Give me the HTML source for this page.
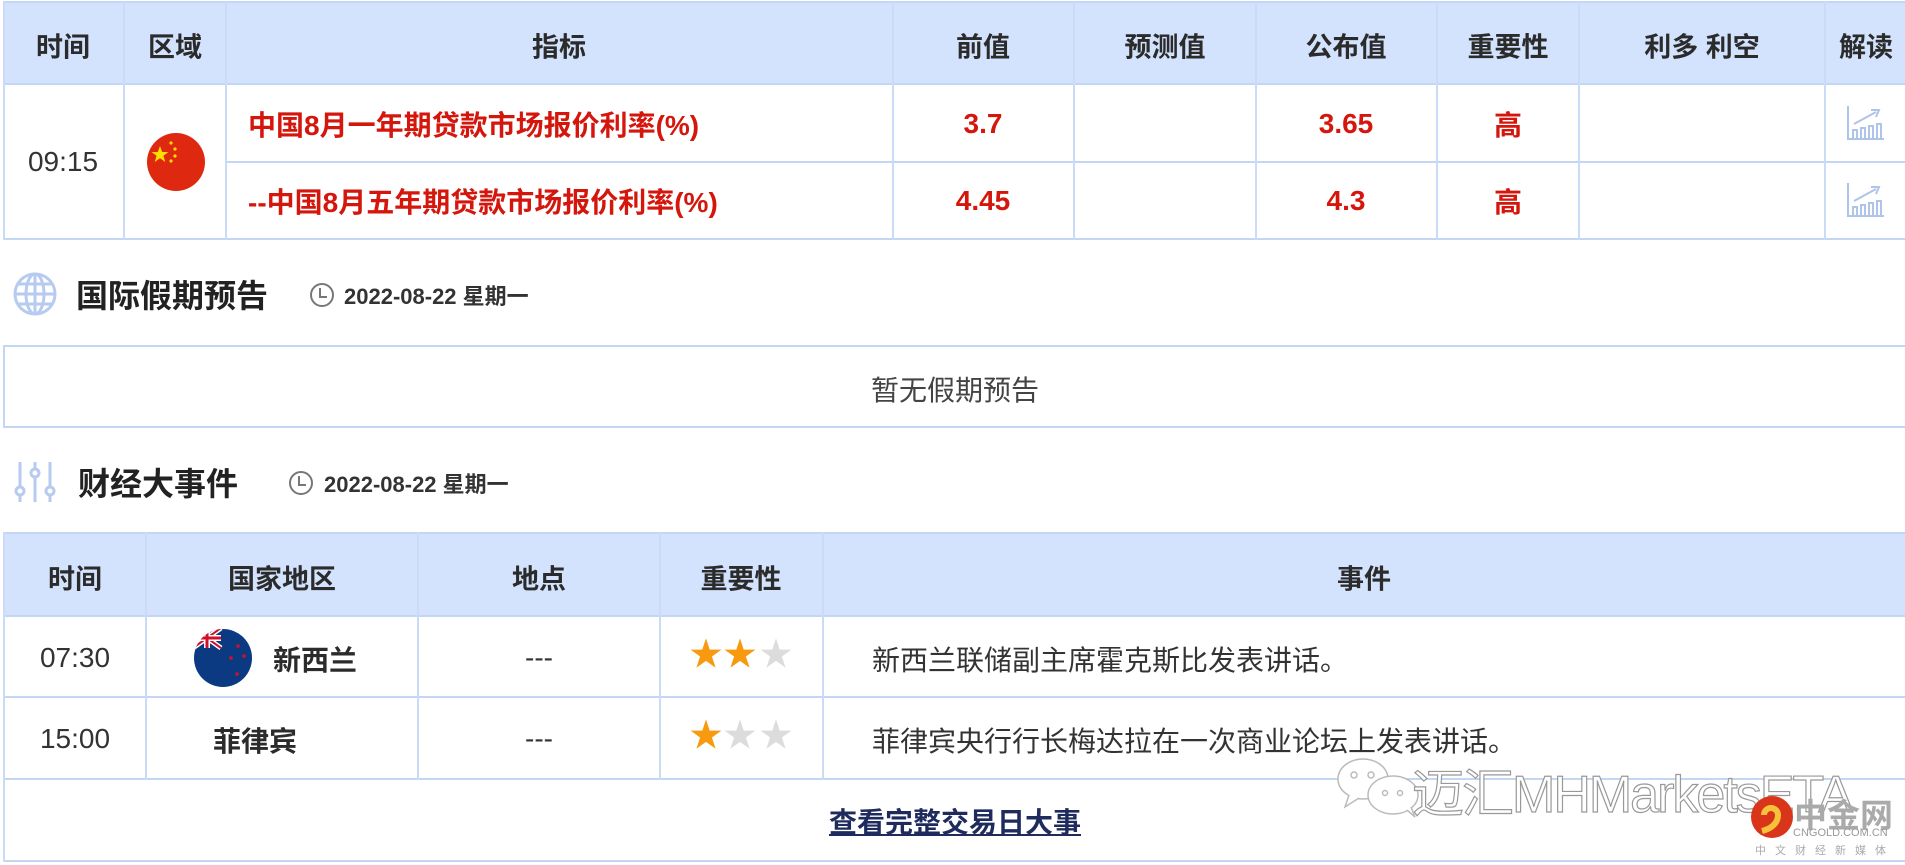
<!DOCTYPE html>
<html><head><meta charset="utf-8">
<style>
*{margin:0;padding:0;box-sizing:border-box}
body{width:1905px;height:865px;background:#fff;position:relative;overflow:hidden;font-family:"Liberation Sans","Noto Sans CJK SC",sans-serif;color:#333}
.a{position:absolute;white-space:nowrap}
.hl{position:absolute;background:#c3d6f4;height:2px}
.vl{position:absolute;background:#c9dbf6;width:2px}
.hdr{position:absolute;background:#d3e3fd}
.t{position:absolute;white-space:nowrap;transform:translate(-50%,-50%)}
.h{font-weight:bold;font-size:27px;color:#2b2b2b}
.r{color:#d4160c;font-weight:bold;font-size:28px}
.n{font-size:28px;color:#333}
.star{position:absolute;font-size:33px;line-height:33px;transform:translate(-50%,-50%)}
</style></head><body>

<!-- Table 1 -->
<div class="hdr" style="left:4px;top:2px;width:1901px;height:82px"></div>
<div class="hl" style="left:4px;top:1px;width:1901px"></div>
<div class="hl" style="left:4px;top:83px;width:1901px"></div>
<div class="hl" style="left:226px;top:161px;width:1679px"></div>
<div class="hl" style="left:4px;top:238px;width:1901px"></div>
<div class="vl" style="left:3px;top:1px;height:239px"></div>
<div class="vl" style="left:123px;top:1px;height:239px"></div>
<div class="vl" style="left:225px;top:1px;height:239px"></div>
<div class="vl" style="left:892px;top:1px;height:239px"></div>
<div class="vl" style="left:1073px;top:1px;height:239px"></div>
<div class="vl" style="left:1255px;top:1px;height:239px"></div>
<div class="vl" style="left:1436px;top:1px;height:239px"></div>
<div class="vl" style="left:1578px;top:1px;height:239px"></div>
<div class="vl" style="left:1824px;top:1px;height:239px"></div>

<div class="t h" style="left:63px;top:45px">时间</div>
<div class="t h" style="left:175px;top:45px">区域</div>
<div class="t h" style="left:559px;top:45px">指标</div>
<div class="t h" style="left:983px;top:45px">前值</div>
<div class="t h" style="left:1165px;top:45px">预测值</div>
<div class="t h" style="left:1346px;top:45px">公布值</div>
<div class="t h" style="left:1508px;top:45px">重要性</div>
<div class="t h" style="left:1702px;top:45px">利多 利空</div>
<div class="t h" style="left:1866px;top:45px">解读</div>

<div class="t n" style="left:63px;top:162px">09:15</div>
<svg class="a" style="left:146px;top:132px" width="60" height="60" viewBox="0 0 60 60">
<circle cx="30" cy="30" r="29" fill="#de2910"/>
<polygon points="14,14 16.2,20 22.5,20 17.4,23.8 19.3,30 14,26.2 8.7,30 10.6,23.8 5.5,20 11.8,20" fill="#ffde00"/>
<circle cx="25" cy="11" r="1.6" fill="#ffde00"/><circle cx="29" cy="17" r="1.6" fill="#ffde00"/><circle cx="29" cy="24" r="1.6" fill="#ffde00"/><circle cx="25" cy="29" r="1.6" fill="#ffde00"/>
</svg>
<div class="a r" style="left:248px;top:124px;transform:translateY(-50%)">中国8月一年期贷款市场报价利率(%)</div>
<div class="a r" style="left:248px;top:201px;transform:translateY(-50%)">--中国8月五年期贷款市场报价利率(%)</div>
<div class="t r" style="left:983px;top:124px">3.7</div>
<div class="t r" style="left:1346px;top:124px">3.65</div>
<div class="t r" style="left:1508px;top:124px">高</div>
<div class="t r" style="left:983px;top:201px">4.45</div>
<div class="t r" style="left:1346px;top:201px">4.3</div>
<div class="t r" style="left:1508px;top:201px">高</div>
<svg class="a" style="left:1846px;top:104px" width="40" height="38" viewBox="0 0 40 38" fill="none" stroke="#aec4ea" stroke-width="2">
<path d="M2 2V35H38"/><path d="M7 34V26H11V34M15 34V24H19V34M23 34V22H27V34M31 34V20H35V34"/><path d="M8 20L30 8"/><path d="M25 6L33 6L30 13"/>
</svg>
<svg class="a" style="left:1846px;top:181px" width="40" height="38" viewBox="0 0 40 38" fill="none" stroke="#aec4ea" stroke-width="2">
<path d="M2 2V35H38"/><path d="M7 34V26H11V34M15 34V24H19V34M23 34V22H27V34M31 34V20H35V34"/><path d="M8 20L30 8"/><path d="M25 6L33 6L30 13"/>
</svg>

<!-- Section 1 -->
<svg class="a" style="left:12px;top:271px" width="46" height="46" viewBox="0 0 46 46" fill="none" stroke="#b6cbef" stroke-width="3">
<circle cx="23" cy="23" r="20"/><ellipse cx="23" cy="23" rx="9" ry="20"/><path d="M3 23H43M6 13H40M6 33H40M23 3V43"/>
</svg>
<div class="a" style="left:76px;top:294px;transform:translateY(-50%);font-size:32px;font-weight:bold;color:#222">国际假期预告</div>
<svg class="a" style="left:309px;top:281px" width="26" height="28" viewBox="0 0 26 28" fill="none" stroke="#777" stroke-width="2"><circle cx="13" cy="14" r="11"/><path d="M11 7V16H18"/></svg>
<div class="a" style="left:344px;top:295px;transform:translateY(-50%);font-size:22px;font-weight:bold;color:#333">2022-08-22 星期一</div>

<div class="a" style="left:3px;top:345px;width:1902px;height:83px;border:2px solid #c3d6f4;border-right:none"></div>
<div class="t" style="left:955px;top:389px;font-size:28px;color:#444">暂无假期预告</div>

<!-- Section 2 -->
<svg class="a" style="left:12px;top:462px" width="46" height="40" viewBox="0 0 46 40" fill="none" stroke="#b6cbef" stroke-width="3">
<path d="M8 0V25M8 33V40M23 0V7M23 15V40M38 0V25M38 33V40"/><circle cx="8" cy="29" r="4"/><circle cx="23" cy="11" r="4"/><circle cx="38" cy="29" r="4"/>
</svg>
<div class="a" style="left:78px;top:482px;transform:translateY(-50%);font-size:32px;font-weight:bold;color:#222">财经大事件</div>
<svg class="a" style="left:288px;top:469px" width="26" height="28" viewBox="0 0 26 28" fill="none" stroke="#777" stroke-width="2"><circle cx="13" cy="14" r="11"/><path d="M11 7V16H18"/></svg>
<div class="a" style="left:324px;top:483px;transform:translateY(-50%);font-size:22px;font-weight:bold;color:#333">2022-08-22 星期一</div>

<!-- Table 2 -->
<div class="hdr" style="left:4px;top:533px;width:1901px;height:83px"></div>
<div class="hl" style="left:4px;top:532px;width:1901px"></div>
<div class="hl" style="left:4px;top:615px;width:1901px"></div>
<div class="hl" style="left:4px;top:696px;width:1901px"></div>
<div class="hl" style="left:4px;top:778px;width:1901px"></div>
<div class="hl" style="left:4px;top:860px;width:1901px"></div>
<div class="vl" style="left:3px;top:532px;height:330px"></div>
<div class="vl" style="left:145px;top:532px;height:248px"></div>
<div class="vl" style="left:417px;top:532px;height:248px"></div>
<div class="vl" style="left:659px;top:532px;height:248px"></div>
<div class="vl" style="left:822px;top:532px;height:248px"></div>

<div class="t h" style="left:75px;top:577px">时间</div>
<div class="t h" style="left:282px;top:577px">国家地区</div>
<div class="t h" style="left:539px;top:577px">地点</div>
<div class="t h" style="left:741px;top:577px">重要性</div>
<div class="t h" style="left:1364px;top:577px">事件</div>

<div class="t n" style="left:75px;top:658px">07:30</div>
<svg class="a" style="left:193px;top:628px" width="60" height="60" viewBox="0 0 60 60">
<defs><clipPath id="c"><circle cx="30" cy="30" r="29"/></clipPath></defs>
<g clip-path="url(#c)"><rect width="60" height="60" fill="#0b3a82"/>
<path d="M0 0L28 20M28 0L0 20" stroke="#fff" stroke-width="5"/><path d="M0 0L28 20M28 0L0 20" stroke="#d0102a" stroke-width="2"/>
<path d="M14 0V20M0 10H28" stroke="#fff" stroke-width="6"/><path d="M14 0V20M0 10H28" stroke="#d0102a" stroke-width="3"/>
<circle cx="45" cy="18" r="1.8" fill="#d0102a"/><circle cx="38" cy="30" r="1.8" fill="#d0102a"/><circle cx="51" cy="28" r="1.8" fill="#d0102a"/><circle cx="44" cy="46" r="1.8" fill="#d0102a"/></g>
</svg>
<div class="a" style="left:273px;top:659px;transform:translateY(-50%);font-size:28px;font-weight:bold;color:#2b2b2b">新西兰</div>
<div class="t n" style="left:539px;top:658px">---</div>
<div class="star" style="left:706px;top:654px;color:#f79a0f">★</div>
<div class="star" style="left:740px;top:654px;color:#f79a0f">★</div>
<div class="star" style="left:776px;top:654px;color:#dcdcdc">★</div>
<div class="a n" style="left:872px;top:659px;transform:translateY(-50%)">新西兰联储副主席霍克斯比发表讲话。</div>

<div class="t n" style="left:75px;top:739px">15:00</div>
<div class="a" style="left:213px;top:740px;transform:translateY(-50%);font-size:28px;font-weight:bold;color:#2b2b2b">菲律宾</div>
<div class="t n" style="left:539px;top:739px">---</div>
<div class="star" style="left:706px;top:735px;color:#f79a0f">★</div>
<div class="star" style="left:740px;top:735px;color:#dcdcdc">★</div>
<div class="star" style="left:776px;top:735px;color:#dcdcdc">★</div>
<div class="a n" style="left:872px;top:740px;transform:translateY(-50%)">菲律宾央行行长梅达拉在一次商业论坛上发表讲话。</div>

<div class="t" style="left:955px;top:821px;font-size:28px;font-weight:bold;color:#1e2b5c;text-decoration:underline">查看完整交易日大事</div>

<!-- watermark -->
<svg class="a" style="left:1335px;top:755px" width="95" height="65" viewBox="0 0 95 65" fill="#fff" stroke="#bbb" stroke-width="1.5">
<ellipse cx="28" cy="24" rx="25" ry="20"/><path d="M14 40L10 52L24 43"/>
<ellipse cx="58" cy="40" rx="25" ry="19"/><path d="M72 55L80 62L76 52"/>
<circle cx="19" cy="20" r="3"/><circle cx="36" cy="20" r="3"/><circle cx="50" cy="38" r="2.5"/><circle cx="65" cy="38" r="2.5"/>
</svg>
<div class="a" style="left:1412px;top:752px;font-size:52px;color:#fff;-webkit-text-stroke:1.2px #999;letter-spacing:-2px">迈汇MHMarketsETA</div>
<svg class="a" style="left:1750px;top:795px" width="44" height="44" viewBox="0 0 44 44"><circle cx="22" cy="22" r="21" fill="#d9351a"/><path d="M14 20a7 7 0 1 1 14 0c0 9-8 14-16 16" stroke="#f7c23a" stroke-width="6" fill="none"/></svg>
<div class="a" style="left:1794px;top:789px;font-size:33px;font-weight:bold;color:#aaa">中金网</div>
<div class="a" style="left:1793px;top:827px;font-size:11px;color:#999">CNGOLD.COM.CN</div>
<div class="a" style="left:1755px;top:842px;font-size:11px;color:#aaa;letter-spacing:9px">中文财经新媒体</div>
</body></html>
